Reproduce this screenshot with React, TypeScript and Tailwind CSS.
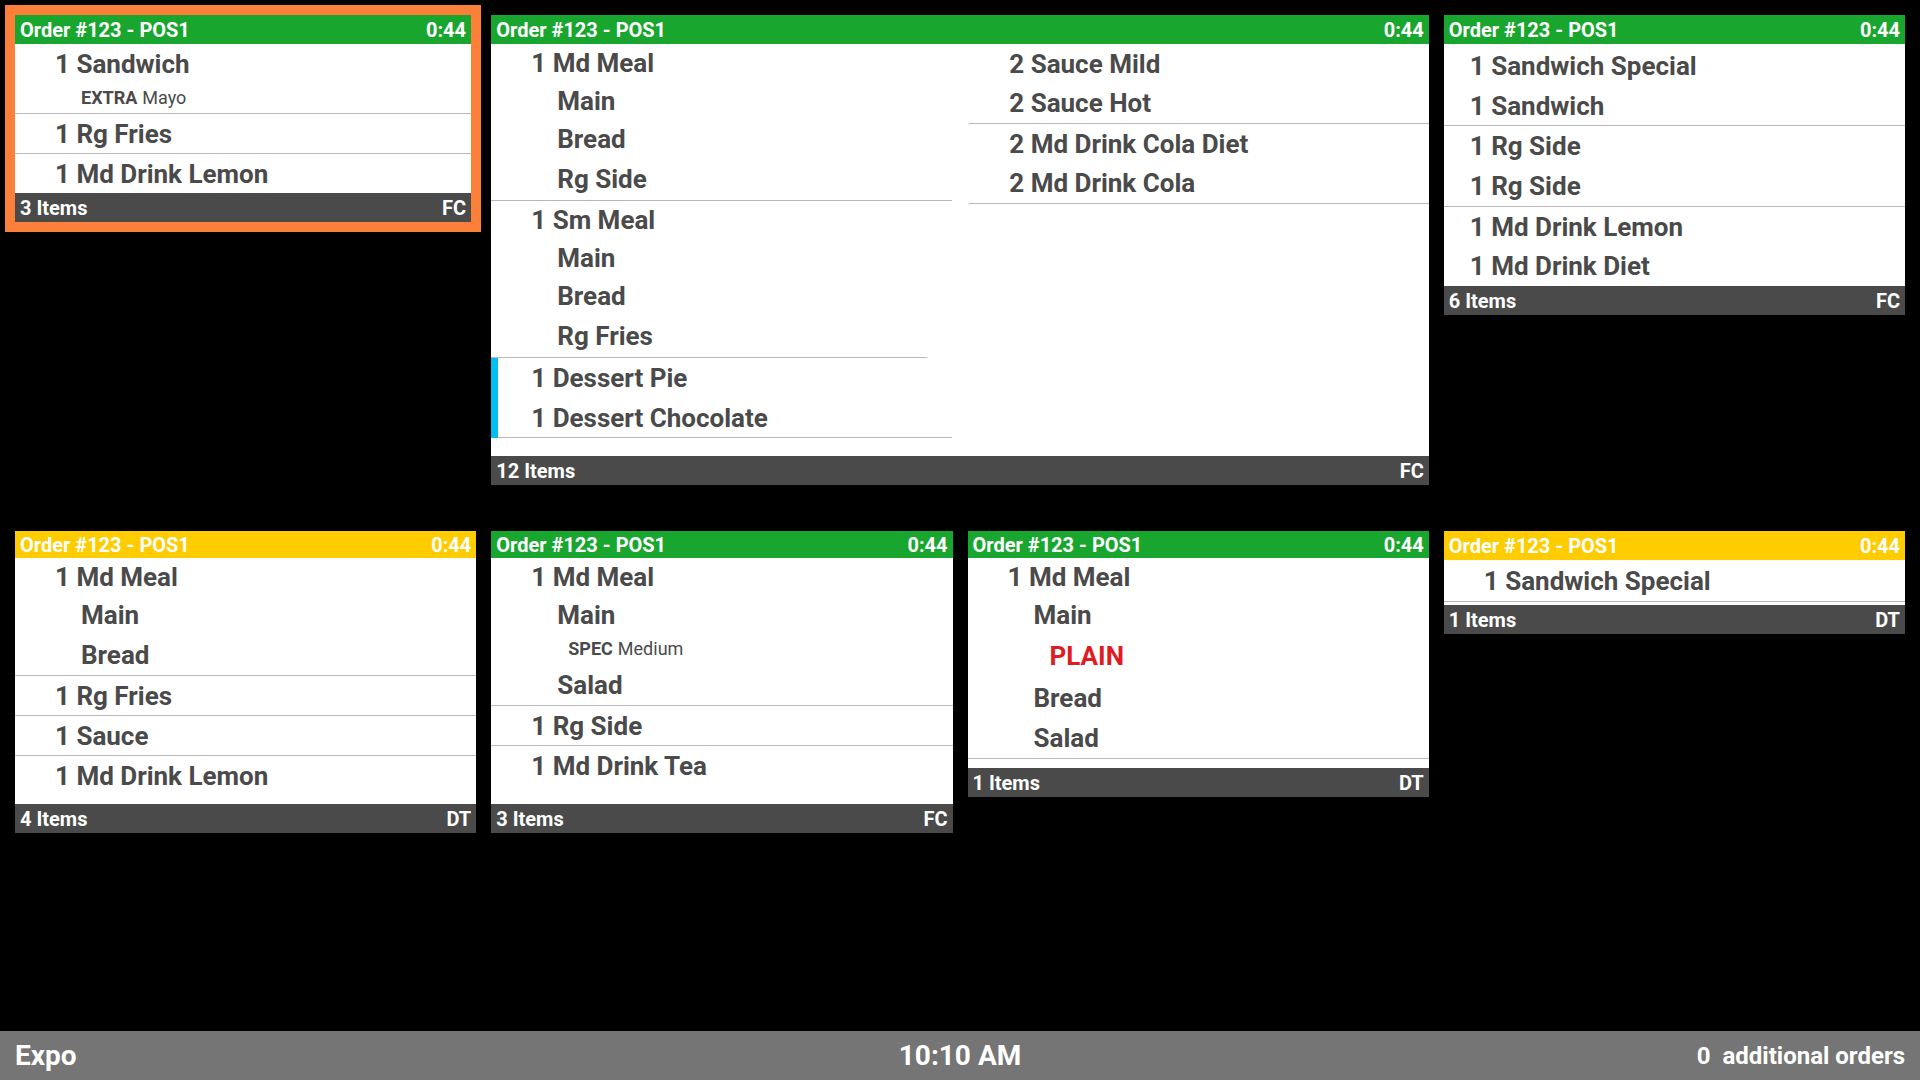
import React from 'react';

type RowProps = { children: React.ReactNode; className?: string };

function Item({ children, className = '' }: RowProps) {
  return (
    <div className={'flex items-center whitespace-nowrap text-[26px] font-bold leading-none text-[#4a4a4a] ' + className}>
      {children}
    </div>
  );
}

function Mod({ bold, rest, className = '' }: { bold: string; rest: string; className?: string }) {
  return (
    <div className={'flex items-center whitespace-nowrap text-[18px] leading-none text-[#4a4a4a] ' + className}>
      <span className="font-bold">{bold}</span>
      <span className="font-normal ml-[5px]">{rest}</span>
    </div>
  );
}

function Header({ color, h }: { color: 'green' | 'yellow'; h: 'top' | 'bottom' }) {
  const bg = color === 'green' ? 'bg-[#19a62f]' : 'bg-[#ffcc00]';
  const hh = h === 'top' ? 'h-[29px]' : 'h-[27px]';
  return (
    <div className={'flex items-center justify-between px-[5px] text-white text-[20px] font-bold leading-none ' + bg + ' ' + hh}>
      <span>Order #123 - POS1</span>
      <span>0:44</span>
    </div>
  );
}

function Footer({ count, tag }: { count: string; tag: string }) {
  return (
    <div className="flex items-center justify-between h-[29px] px-[5px] bg-[#4a4a4a] text-white text-[20px] font-bold leading-none">
      <span>{count}</span>
      <span>{tag}</span>
    </div>
  );
}

const sep = 'border-b border-[#b8b8b8]';

export default function App() {
  return (
    <div className="w-[1920px] h-[1080px] bg-black flex flex-col overflow-hidden font-['Roboto',sans-serif]">
      <div className="flex-1 grid grid-cols-4 grid-rows-[501px_1fr] gap-x-[15px] gap-y-[15px] pt-[15px] px-[15px] items-start">
        {/* Card 1 - selected */}
        <div className="w-[456px] flex flex-col bg-white ring-[10px] ring-[#fd803a]">
          <Header color="green" h="top" />
          <div className={sep}>
            <Item className="h-[39px] pl-[40px]">1 Sandwich</Item>
            <Mod bold="EXTRA" rest="Mayo" className="h-[30px] pl-[66px]" />
          </div>
          <div className={sep}>
            <Item className="h-[39px] pl-[40px]">1 Rg Fries</Item>
          </div>
          <Item className="h-[39px] pl-[40px]">1 Md Drink Lemon</Item>
          <Footer count="3 Items" tag="FC" />
        </div>

        {/* Card 2 - wide */}
        <div className="col-span-2 flex flex-col bg-white">
          <Header color="green" h="top" />
          <div className="flex h-[412px]">
            <div className="w-[461px] flex flex-col">
              <div className={sep}>
                <Item className="h-[38px] pl-[40px]">1 Md Meal</Item>
                <Item className="h-[37.5px] pl-[66px]">Main</Item>
                <Item className="h-[39px] pl-[66px]">Bread</Item>
                <Item className="h-[41.5px] pl-[66px]">Rg Side</Item>
              </div>
              <div className="flex flex-col">
                <Item className="h-[38px] pl-[40px]">1 Sm Meal</Item>
                <Item className="h-[37.5px] pl-[66px]">Main</Item>
                <Item className="h-[39px] pl-[66px]">Bread</Item>
                <Item className="h-[41.5px] pl-[66px]">Rg Fries</Item>
                <div className="h-[1px] mr-[25px] bg-[#b8b8b8]" />
              </div>
              <div className="flex">
                <div className="w-[7px] bg-[#00bff3]" />
                <div className={'flex-1 ' + sep}>
                  <Item className="h-[40px] pl-[33px]">1 Dessert Pie</Item>
                  <Item className="h-[39px] pl-[33px]">1 Dessert Chocolate</Item>
                </div>
              </div>
            </div>
            <div className="flex-1 ml-[17px] flex flex-col">
              <div className={sep}>
                <Item className="h-[39.5px] pl-[40px]">2 Sauce Mild</Item>
                <Item className="h-[39.5px] pl-[40px]">2 Sauce Hot</Item>
              </div>
              <div className={sep}>
                <Item className="h-[39.5px] pl-[40px]">2 Md Drink Cola Diet</Item>
                <Item className="h-[39.5px] pl-[40px]">2 Md Drink Cola</Item>
              </div>
            </div>
          </div>
          <Footer count="12 Items" tag="FC" />
        </div>

        {/* Card 3 */}
        <div className="flex flex-col bg-white">
          <Header color="green" h="top" />
          <div className={sep}>
            <Item className="h-[42px] pl-[26px] pt-[2px]">1 Sandwich Special</Item>
            <Item className="h-[39px] pl-[26px]">1 Sandwich</Item>
          </div>
          <div className={sep}>
            <Item className="h-[40px] pl-[26px]">1 Rg Side</Item>
            <Item className="h-[40px] pl-[26px]">1 Rg Side</Item>
          </div>
          <div>
            <Item className="h-[39.5px] pl-[26px]">1 Md Drink Lemon</Item>
            <Item className="h-[39.5px] pl-[26px]">1 Md Drink Diet</Item>
          </div>
          <Footer count="6 Items" tag="FC" />
        </div>

        {/* Card 5 */}
        <div className="flex flex-col bg-white">
          <Header color="yellow" h="bottom" />
          <div className={sep}>
            <Item className="h-[38.5px] pl-[40px]">1 Md Meal</Item>
            <Item className="h-[37.5px] pl-[66px]">Main</Item>
            <Item className="h-[41px] pl-[66px]">Bread</Item>
          </div>
          <div className={sep}>
            <Item className="h-[39px] pl-[40px]">1 Rg Fries</Item>
          </div>
          <div className={sep}>
            <Item className="h-[39px] pl-[40px]">1 Sauce</Item>
          </div>
          <div className="pb-[9px]">
            <Item className="h-[39px] pl-[40px]">1 Md Drink Lemon</Item>
          </div>
          <Footer count="4 Items" tag="DT" />
        </div>

        {/* Card 6 */}
        <div className="flex flex-col bg-white">
          <Header color="green" h="bottom" />
          <div className={sep}>
            <Item className="h-[38px] pl-[40px]">1 Md Meal</Item>
            <Item className="h-[37px] pl-[66px]">Main</Item>
            <Mod bold="SPEC" rest="Medium" className="h-[31px] pl-[77px]" />
            <Item className="h-[41px] pl-[66px]">Salad</Item>
          </div>
          <div className={sep}>
            <Item className="h-[39px] pl-[40px]">1 Rg Side</Item>
          </div>
          <div className="pb-[19px]">
            <Item className="h-[39px] pl-[40px]">1 Md Drink Tea</Item>
          </div>
          <Footer count="3 Items" tag="FC" />
        </div>

        {/* Card 7 */}
        <div className="flex flex-col bg-white">
          <Header color="green" h="bottom" />
          <div className={sep}>
            <Item className="h-[38.5px] pl-[40px]">1 Md Meal</Item>
            <Item className="h-[37.5px] pl-[66px]">Main</Item>
            <Item className="h-[43.5px] pl-[82px] !text-[#e01b22]">PLAIN</Item>
            <Item className="h-[40.5px] pl-[66px]">Bread</Item>
            <Item className="h-[40px] pl-[66px]">Salad</Item>
          </div>
          <div className="h-[9px]" />
          <Footer count="1 Items" tag="DT" />
        </div>

        {/* Card 8 */}
        <div className="flex flex-col bg-white">
          <Header color="yellow" h="top" />
          <div className={sep}>
            <Item className="h-[41px] pl-[40px]">1 Sandwich Special</Item>
          </div>
          <div className="h-[3px]" />
          <Footer count="1 Items" tag="DT" />
        </div>
      </div>

      <div className="h-[49px] shrink-0 bg-[#757575] grid grid-cols-3 items-center px-[15px] text-white font-bold leading-none">
        <span className="text-[28px]">Expo</span>
        <span className="text-[28px] text-center">10:10 AM</span>
        <span className="text-[24px] text-right">
          0<span className="ml-[12px]">additional orders</span>
        </span>
      </div>
    </div>
  );
}
